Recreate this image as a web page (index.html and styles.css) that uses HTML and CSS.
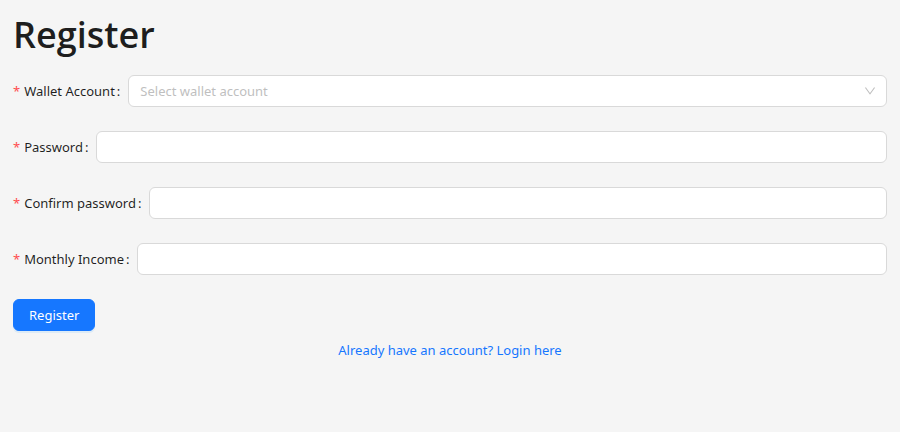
FILE: index.html
```html
<!DOCTYPE html>
<html lang="en">
<head>
<meta charset="utf-8">
<meta name="viewport" content="width=device-width, initial-scale=1">
<title>Register</title>
<link rel="stylesheet" href="styles.css">
</head>
<body>
<main class="page">
  <h1 class="title">Register</h1>
  <form class="form">
    <div class="field">
      <label class="label" for="wallet"><span class="required">*</span>Wallet Account<span class="colon">:</span></label>
      <div class="select-wrap">
        <select class="control select" id="wallet" required>
          <option value="">Select wallet account</option>
        </select>
        <svg class="chevron" viewBox="64 64 896 896" width="12" height="12" fill="currentColor" aria-hidden="true"><path d="M884 256h-75c-5.100 0-9.900 2.500-12.900 6.600L512 654.200 227.900 262.600c-3-4.100-7.800-6.600-12.900-6.600h-75c-6.500 0-10.300 7.400-6.500 12.700l352.600 486.100c12.800 17.600 39 17.600 51.700 0l352.600-486.100c3.900-5.300.1-12.700-6.400-12.700z"/></svg>
      </div>
    </div>
    <div class="field">
      <label class="label" for="password"><span class="required">*</span>Password<span class="colon">:</span></label>
      <input class="control" id="password" type="password" required>
    </div>
    <div class="field">
      <label class="label" for="confirm"><span class="required">*</span>Confirm password<span class="colon">:</span></label>
      <input class="control" id="confirm" type="password" required>
    </div>
    <div class="field">
      <label class="label" for="income"><span class="required">*</span>Monthly Income<span class="colon">:</span></label>
      <input class="control" id="income" type="text" required>
    </div>
    <button class="submit" type="submit">Register</button>
  </form>
  <p class="login"><a class="link" href="#login">Already have an account? Login here</a></p>
</main>
</body>
</html>
```

FILE: styles.css
```css
* { box-sizing: border-box; }

body {
  margin: 0;
  background: #f5f5f5;
  color: rgba(0, 0, 0, 0.88);
  font: 13px/22px "Noto Sans", "Open Sans", sans-serif;
}

.page { padding: 12px 13px; }

.title {
  margin: 0 0 17px;
  font-family: "Open Sans", "Noto Sans", sans-serif;
  font-size: 36px;
  line-height: 46px;
  font-weight: 600;
}

.field {
  display: flex;
  align-items: center;
  margin-bottom: 24px;
}

.label {
  flex: none;
  margin-right: 8px;
}

.required {
  margin-right: 4px;
  color: #ff4d4f;
}

.colon { margin-left: 2px; }

.control {
  flex: 1;
  width: 100%;
  min-width: 0;
  height: 32px;
  padding: 4px 11px;
  border: 1px solid #d9d9d9;
  border-radius: 6px;
  background: #fff;
  color: inherit;
  font: inherit;
  outline: none;
}

.select-wrap {
  position: relative;
  display: flex;
  flex: 1;
}

.select {
  appearance: none;
  color: #bfbfbf;
}

.chevron {
  position: absolute;
  top: 10px;
  right: 11px;
  color: #bfbfbf;
  pointer-events: none;
}

.control:focus { border-color: #1677ff; }

.submit {
  display: block;
  height: 32px;
  padding: 4px 15px;
  border: 1px solid #1677ff;
  border-radius: 6px;
  background: #1677ff;
  box-shadow: 0 2px 0 rgba(5, 145, 255, 0.1);
  color: #fff;
  font: inherit;
  cursor: pointer;
}

.login {
  margin: 8px 0 0;
  text-align: center;
}

.link {
  color: #1677ff;
  text-decoration: none;
}
```
